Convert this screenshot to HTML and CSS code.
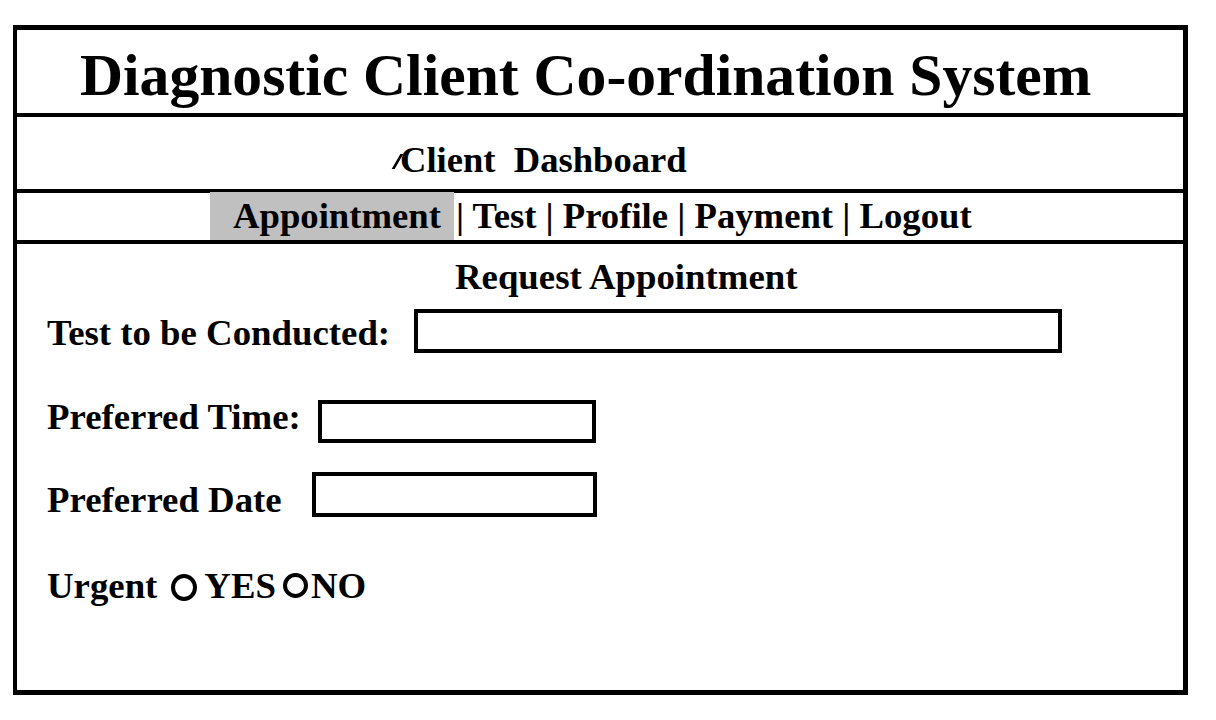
FILE: index.html
```html
<!DOCTYPE html>
<html>
<head>
<meta charset="utf-8">
<title>Diagnostic Client Co-ordination System</title>
<link rel="stylesheet" href="styles.css">
</head>
<body>
<div class="frame">
  <header class="title-bar">
    <h1 class="title">Diagnostic Client Co-ordination System</h1>
  </header>
  <div class="sep"></div>
  <div class="sub-bar">
    <span class="stray"></span><h2 class="subtitle">Client&nbsp; Dashboard</h2>
  </div>
  <div class="sep"></div>
  <nav class="nav-bar">
    <span class="nav-active">Appointment</span><span class="nav-links">| Test | Profile | Payment | Logout</span>
  </nav>
  <div class="sep"></div>
  <main class="content">
    <h3 class="form-title">Request Appointment</h3>
    <div class="row row-test">
      <span class="label">Test to be Conducted:</span>
      <span class="box box-test"></span>
    </div>
    <div class="row row-time">
      <span class="label">Preferred Time:</span>
      <span class="box box-time"></span>
    </div>
    <div class="row row-date">
      <span class="label">Preferred Date</span>
      <span class="box box-date"></span>
    </div>
    <div class="row row-urgent">
      <span class="label">Urgent</span>
      <span class="radio radio-yes"></span><span class="label">YES</span>
      <span class="radio radio-no"></span><span class="label">NO</span>
    </div>
  </main>
</div>
</body>
</html>
```

FILE: styles.css
```css
* { box-sizing: border-box; }
html, body { margin: 0; padding: 0; background: #fff; }
body {
  font-family: "Liberation Serif", "Times New Roman", serif;
  font-weight: bold;
  color: #000;
  width: 1216px;
  height: 720px;
  overflow: hidden;
}
.frame {
  margin: 25px 0 0 13px;
  width: 1175px;
  height: 670px;
  border: 5px solid #000;
  border-left-width: 4px;
  display: flex;
  flex-direction: column;
}
.sep {
  height: 4px;
  background: #000;
  margin: 0 -3px 0 -4px;
  flex: none;
}
.title-bar {
  height: 83px;
  flex: none;
  padding: 15px 0 0 63px;
}
.title {
  margin: 0;
  font-size: 59.6px;
  line-height: 60px;
  font-weight: bold;
}
.sub-bar {
  height: 72px;
  flex: none;
  padding: 23px 0 0 379px;
  display: flex;
  align-items: flex-start;
}
.stray {
  display: block;
  width: 3px;
  height: 15px;
  background: #000;
  transform: skewX(-30deg);
  margin: 14px 0 0 0;
  flex: none;
}
.subtitle {
  margin: 0 0 0 1px;
  font-size: 36.6px;
  line-height: 40px;
  font-weight: bold;
}
.nav-bar {
  height: 47px;
  flex: none;
  padding-left: 193px;
  display: flex;
  align-items: flex-start;
  font-size: 36.7px;
  line-height: 41px;
}
.nav-active {
  background: #c0c0c0;
  padding: 3px 13px 4px 23px;
  margin-top: -1px;
  height: 48px;
}
.nav-links { margin-left: 2px; padding-top: 2px; }
.content {
  flex: 1;
  padding: 0 0 0 30px;
  font-size: 36.8px;
}
.form-title {
  margin: 13px 0 0 408px;
  font-size: 36.8px;
  line-height: 40px;
  font-weight: bold;
}
.row {
  display: flex;
  align-items: flex-start;
}
.label { line-height: 40px; }
.box {
  border: 4px solid #000;
  display: block;
  flex: none;
}
.row-test { margin-top: 12px; }
.row-test .label { margin-top: 4px; }
.box-test { width: 648px; height: 44px; margin-left: 24px; }
.row-time { margin-top: 44px; }
.box-time { width: 278px; height: 43px; margin: 3px 0 0 17px; }
.row-date { margin-top: 29px; }
.row-date .label { margin-top: 8px; }
.box-date { width: 285px; height: 45px; margin-left: 30px; }
.row-urgent { margin-top: 46px; }
.radio {
  width: 26px;
  height: 27px;
  border: 4px solid #000;
  border-radius: 50%;
  display: block;
  flex: none;
}
.radio-yes { margin: 8px 7px 0 14px; }
.radio-no { width: 25px; height: 25px; margin: 7px 3px 0 7px; }
```
